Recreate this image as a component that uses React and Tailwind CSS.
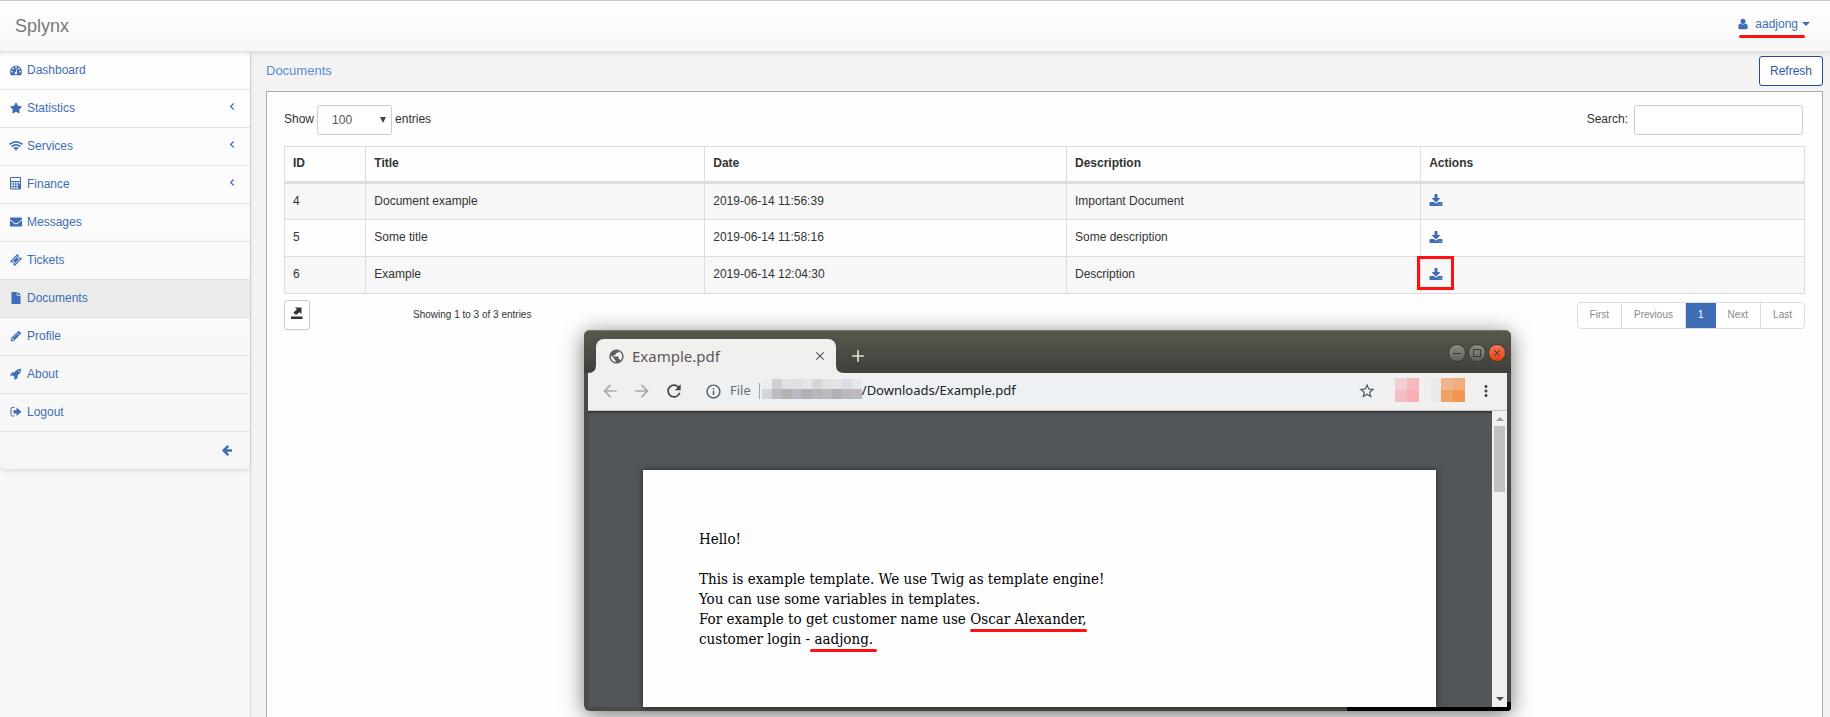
import { FaStar, FaEnvelope, FaFile } from 'react-icons/fa'
import { MdPublic, MdInfoOutline, MdStarBorder, MdArrowBack, MdArrowForward, MdRefresh, MdMoreVert, MdClose, MdAdd } from 'react-icons/md'

const shapes = {
  dashboard:
    'M384 1152q0-53-37.500-90.500t-90.500-37.500-90.500 37.500-37.500 90.500 37.500 90.500 90.500 37.500 90.500-37.500 37.500-90.500zm192-448q0-53-37.500-90.500t-90.500-37.500-90.500 37.500-37.500 90.500 37.500 90.500 90.500 37.500 90.500-37.500 37.500-90.500zm428 481l101-382q6-26-7.500-48.500t-38.500-29.500-48 6.500-30 39.500l-101 382q-60 5-107 43.500t-63 98.500q-20 77 20 146t117 89 146-20 89-117q16-60-6-117t-72-91zm660-33q0-53-37.500-90.500t-90.500-37.500-90.500 37.500-37.500 90.500 37.500 90.500 90.500 37.500 90.500-37.500 37.500-90.500zm-640-640q0-53-37.500-90.500t-90.500-37.500-90.500 37.500-37.500 90.500 37.500 90.500 90.500 37.500 90.500-37.500 37.500-90.500zm448 192q0-53-37.500-90.500t-90.500-37.500-90.500 37.500-37.500 90.500 37.500 90.500 90.500 37.500 90.500-37.500 37.500-90.500zm320 448q0 261-141 483-19 29-54 29h-1402q-35 0-54-29-141-221-141-483 0-182 71-348t191-286 286-191 348-71 348 71 286 191 191 286 71 348z',
  ticket:
    'M1024 452l316 316-572 572-316-316zm-211 979l618-618q19-19 19-45t-19-45l-362-362q-18-18-45-18t-45 18l-618 618q-19 19-19 45t19 45l362 362q18 18 45 18t45-18zm889-637l-907 908q-37 37-90.500 37t-90.500-37l-126-126q56-56 56-136t-56-136-136-56-136 56l-125-126q-37-37-37-90.500t37-90.500l907-906q37-37 90.500-37t90.500 37l125 125q-56 56-56 136t56 136 136 56 136-56l126 125q37 37 37 90.500t-37 90.500z',
  pencil:
    'M491 1536l91-91-235-235-91 91v107h128v128h107zm523-928q0-22-22-22-10 0-17 7l-542 542q-7 7-7 17 0 22 22 22 10 0 17-7l542-542q7-7 7-17zm-54-192l416 416-832 832h-416v-416zm683 96q0 53-37 90l-166 166-416-416 166-165q36-38 90-38 53 0 91 38l235 234q37 39 37 91z',
  rocket:
    'M1440 448q0-40-28-68t-68-28-68 28-28 68 28 68 68 28 68-28 28-68zm224-288q0 249-75.500 430.500t-253.500 360.500q-81 80-195 176l-20 379q-2 16-16 26l-384 224q-7 4-16 4-12 0-23-9l-64-64q-13-14-8-32l85-276-281-281-276 85q-3 1-9 1-14 0-23-9l-64-64q-17-19-5-39l224-384q10-14 26-16l379-20q96-114 176-195 188-187 358-258t431-71q14 0 24 9.500t10 22.500z',
  back:
    'M1664 896v128q0 53-32.500 90.500t-84.500 37.500h-704l293 294q38 36 38 90t-38 90l-75 76q-37 37-90 37-52 0-91-37l-651-652q-37-37-37-90 0-52 37-91l651-650q38-38 91-38 52 0 90 38l75 74q38 38 38 91t-38 91l-293 293h704q52 0 84.500 37.500t32.500 90.500z',
  user:
    'M1600 1405q0 120-73 189.500t-194 69.500h-874q-121 0-194-69.500t-73-189.500q0-53 3.500-103.500t14-109 26.500-108.500 43-97.500 62-81 85.500-53.500 111.500-20q9 0 42 21.500t74.500 48 108 48 133.500 21.500 133.500-21.500 108-48 74.500-48 42-21.500q61 0 111.500 20t85.500 53.500 62 81 43 97.500 26.500 108.500 14 109 3.500 103.500zm-320-893q0 159-112.500 271.500t-271.500 112.500-271.500-112.500-112.500-271.500 112.500-271.500 271.500-112.500 271.500 112.500 112.500 271.500z',
  download:
    'M1344 1344q0-26-19-45t-45-19-45 19-19 45 19 45 45 19 45-19 19-45zm256 0q0-26-19-45t-45-19-45 19-19 45 19 45 45 19 45-19 19-45zm128-224v320q0 40-28 68t-68 28h-1472q-40 0-68-28t-28-68v-320q0-40 28-68t68-28h465l135 136q58 56 136 56t136-56l136-136h464q40 0 68 28t28 68zm-325-569q17 41-14 70l-448 448q-18 19-45 19t-45-19l-448-448q-31-29-14-70 17-39 59-39h256v-448q0-26 19-45t45-19h256q26 0 45 19t19 45v448h256q42 0 59 39z',
}

function Glyph({ name, className }) {
  return (
    <svg viewBox="0 0 1792 1792" className={className} fill="currentColor">
      <path d={shapes[name]} />
    </svg>
  )
}

function WifiIcon() {
  return (
    <svg viewBox="0 0 14 12" className="-ml-px h-3 w-3.5" fill="none" stroke="currentColor" strokeWidth="1.8">
      <path d="M0.6 4.2Q7 -0.6 13.4 4.2M2.7 6.5Q7 3.2 11.3 6.5M4.8 8.6Q7 7 9.2 8.6" />
      <path d="M5.7 9.6Q7 8.9 8.3 9.6L7 11Z" fill="currentColor" stroke="none" />
    </svg>
  )
}

function CalculatorIcon() {
  return (
    <svg viewBox="0 0 12 13" className="h-[13px] w-3" fill="none" stroke="currentColor">
      <path d="M0.5 0.5H10.5V12H0.5ZM0.5 4.5H10.5" />
      <path d="M0.5 7H10.5M0.5 9.5H10.5M3.2 4.5V12M5.7 4.5V12M8.2 4.5V12" strokeWidth="0.8" />
      <path d="M8.5 7.2H10.5V12H8.5Z" fill="currentColor" stroke="none" />
    </svg>
  )
}

function SignOutIcon() {
  return (
    <svg viewBox="0 0 12 12" className="size-3" fill="none" stroke="currentColor">
      <path d="M4.5 1.5H2.2Q1 1.5 1 2.8V8.7Q1 10 2.2 10H4.5" />
      <path d="M3.5 4.2H6.5V1.5L11.5 5.8L6.5 10.1V7.4H3.5Z" fill="currentColor" stroke="none" />
    </svg>
  )
}

function ExportIcon() {
  return (
    <svg viewBox="0 0 12 13" className="mb-1 h-[13px] w-3" fill="currentColor">
      <path d="M4 0.5H10.5V7L8.5 5.2L5 8L2.3 5.6L5.8 2.6ZM0 9.5H11.5V12H0Z" />
    </svg>
  )
}

function ChevronIcon() {
  return (
    <svg viewBox="0 0 4 7" className="mb-0.5 h-[7px] w-1" fill="none" stroke="currentColor" strokeWidth="1.2">
      <path d="M3.7 0.5L0.7 3.5L3.7 6.5" />
    </svg>
  )
}

const menu = [
  { label: 'Dashboard', icon: <Glyph name="dashboard" className="size-3" /> },
  { label: 'Statistics', icon: <FaStar size={12} />, more: true },
  { label: 'Services', icon: <WifiIcon />, more: true },
  { label: 'Finance', icon: <CalculatorIcon />, more: true },
  { label: 'Messages', icon: <FaEnvelope size={12} /> },
  { label: 'Tickets', icon: <Glyph name="ticket" className="size-3" /> },
  { label: 'Documents', icon: <FaFile size={12} />, active: true },
  { label: 'Profile', icon: <Glyph name="pencil" className="size-3" /> },
  { label: 'About', icon: <Glyph name="rocket" className="size-3" /> },
  { label: 'Logout', icon: <SignOutIcon /> },
]

const rows = [
  { id: 4, title: 'Document example', date: '2019-06-14 11:56:39', description: 'Important Document' },
  { id: 5, title: 'Some title', date: '2019-06-14 11:58:16', description: 'Some description' },
  { id: 6, title: 'Example', date: '2019-06-14 12:04:30', description: 'Description', marked: true },
]

function Header() {
  return (
    <header className="relative z-10 flex h-[52px] items-center justify-between border-t border-b border-t-[#c8c8c8] border-b-[#e4e4e4] bg-linear-to-b from-white to-[#f7f7f7] pr-5 pl-[15px] shadow-[0_1px_6px_rgba(0,0,0,0.1)]">
      <a href="#home" className="text-lg text-[#777777]">Splynx</a>
      <button type="button" className="relative flex items-center gap-1 pb-1">
        <Glyph name="user" className="mr-0.5 size-3" />
        aadjong
        <span className="border-x-4 border-t-4 border-x-transparent border-t-current" />
        <span className="absolute -bottom-0.5 left-0.5 h-[3px] w-[66px] rounded-full bg-[#ff0f0f]" />
      </button>
    </header>
  )
}

function Sidebar() {
  return (
    <aside className="w-[251px] shrink-0 border-r border-[#d9d9d9] bg-[#f7f7f7]">
      <nav className="rounded-md border-b border-[#e2e2e2] bg-linear-to-b from-[#fefefe] to-[#f6f6f6] shadow-[0_1px_5px_rgba(0,0,0,0.1)]">
        <ul>
          {menu.map((item) => (
            <li key={item.label} className={item.active ? 'border-b border-[#e2e2e2] bg-[#ebebeb]' : 'border-b border-[#e2e2e2]'}>
              <a href={'#' + item.label.toLowerCase()} className="flex h-[37px] items-center pr-4 pb-0.5 pl-2.5">
                <span className="flex w-[17px] items-center">{item.icon}</span>
                <span className="grow">{item.label}</span>
                {item.more && <ChevronIcon />}
              </a>
            </li>
          ))}
        </ul>
        <button type="button" aria-label="Collapse menu" className="flex h-[37px] w-full items-center justify-end pr-[17px] pb-0.5">
          <Glyph name="back" className="size-3" />
        </button>
      </nav>
    </aside>
  )
}

const cell = 'border border-[#dddddd] px-2 pb-0.5'
const pagerItem = 'border-r border-[#dddddd] px-3 text-[#888888] last:border-r-0'

function Documents() {
  return (
    <main className="flex min-w-0 grow flex-col pr-[7px] pl-[15px]">
      <div className="flex h-[39px] items-start justify-between pt-1">
        <h1 className="text-[13px] leading-[30px] text-[#5b8bd4]">Documents</h1>
        <button type="button" className="h-[30px] rounded-[3px] border border-[#234a9c] bg-white px-2.5 text-[#3058a8]">Refresh</button>
      </div>
      <section className="grow border border-b-0 border-[#acacac] bg-[#fefefe] px-[17px] pt-[13px] text-[#333333]">
        <div className="flex items-center justify-between">
          <label className="flex items-center gap-[3px]">
            <span className="pb-0.5">Show</span>
            <span className="relative flex">
              <select defaultValue="100" className="h-[30px] w-[75px] appearance-none rounded-[3px] border border-[#cccccc] bg-white pl-3.5 text-[#555555]">
                <option>10</option>
                <option>100</option>
              </select>
              <span className="pointer-events-none absolute top-3 right-1.5 border-x-3 border-t-6 border-x-transparent border-t-[#444444]" />
            </span>
            <span className="pb-0.5">entries</span>
          </label>
          <label className="flex items-center gap-1.5 pr-0.5">
            <span className="pb-0.5">Search:</span>
            <input type="search" className="h-[30px] w-[169px] rounded-[3px] border border-[#cccccc] bg-white px-2" />
          </label>
        </div>
        <table className="mt-[11px] w-full table-fixed border-collapse text-left">
          <colgroup>
            <col className="w-[5.35%]" />
            <col className="w-[22.3%]" />
            <col className="w-[23.8%]" />
            <col className="w-[23.3%]" />
            <col />
          </colgroup>
          <thead>
            <tr className="h-9">
              {['ID', 'Title', 'Date', 'Description', 'Actions'].map((name) => (
                <th key={name} className="border border-b-3 border-[#dddddd] px-2 pb-0.5 font-bold">{name}</th>
              ))}
            </tr>
          </thead>
          <tbody>
            {rows.map((row) => (
              <tr key={row.id} className="h-[37px] odd:bg-[#f7f7f7]">
                <td className={cell}>{row.id}</td>
                <td className={cell}>{row.title}</td>
                <td className={cell}>{row.date}</td>
                <td className={cell}>{row.description}</td>
                <td className={cell}>
                  <a href={'#download-' + row.id} aria-label={'Download ' + row.title} className="relative inline-flex align-middle text-[#3f6db5]">
                    <Glyph name="download" className="size-3.5" />
                    {row.marked && <span className="absolute -top-3 -left-3 h-[34px] w-[37px] border-3 border-[#ff0f0f]" />}
                  </a>
                </td>
              </tr>
            ))}
          </tbody>
        </table>
        <div className="mt-1.5 flex items-center justify-between">
          <div className="flex items-center">
            <button type="button" aria-label="Export" className="flex h-[30px] w-[26px] items-center justify-center rounded-[3px] border border-[#cccccc] bg-white shadow-xs">
              <ExportIcon />
            </button>
            <p className="ml-[103px] text-[10px]">Showing 1 to 3 of 3 entries</p>
          </div>
          <div className="flex h-[27px] items-stretch overflow-hidden rounded-sm border border-[#dddddd] bg-white text-[10px]">
            <button type="button" className={pagerItem}>First</button>
            <button type="button" className={pagerItem}>Previous</button>
            <button type="button" className="bg-[#3f6db5] px-3 text-white">1</button>
            <button type="button" className={pagerItem}>Next</button>
            <button type="button" className={pagerItem}>Last</button>
          </div>
        </div>
      </section>
    </main>
  )
}

const hiddenPath = [
  ['bg-[#e9edef]', 'bg-[#cfd0d4]', 'bg-[#dfe1e4]', 'bg-[#dde1e5]', 'bg-[#e3e6e8]', 'bg-[#d5d6da]', 'bg-[#dfe2e4]', 'bg-[#e2e4e6]', 'bg-[#dadde4]', 'bg-[#e5e8ea]'],
  ['bg-[#d4d5d7]', 'bg-[#babbc4]', 'bg-[#b5b1b2]', 'bg-[#b8b9c6]', 'bg-[#b4afb1]', 'bg-[#b6b7bf]', 'bg-[#bbbbb9]', 'bg-[#b0afb6]', 'bg-[#b9b8bd]', 'bg-[#bababf]'],
]

function TitleBar() {
  return (
    <div className="-mx-1 flex h-[43px] items-end justify-between rounded-t-md border-t border-[#77776e] bg-linear-to-b from-[#58584e] to-[#403f3a] pr-1.5 pl-3">
      <div className="flex items-center">
        <div className="relative flex h-[34px] w-60 items-center rounded-t-lg bg-[#f2f0ee] pr-[9px] pl-3">
          <svg viewBox="0 0 8 8" className="absolute bottom-0 -left-2 size-2" fill="#f2f0ee"><path d="M8 0V8H0Q8 8 8 0Z" /></svg>
          <svg viewBox="0 0 8 8" className="absolute -right-2 bottom-0 size-2" fill="#f2f0ee"><path d="M0 0V8H8Q0 8 0 0Z" /></svg>
          <MdPublic size={17} color="#5b5e63" />
          <span className="grow pl-[7px] text-[15px] text-[#58585a]">Example.pdf</span>
          <button type="button" aria-label="Close tab" className="text-[#555555]"><MdClose size={14} /></button>
        </div>
        <button type="button" aria-label="New tab" className="ml-3 text-[#e3e0d3]"><MdAdd size={20} /></button>
      </div>
      <div className="mb-3 flex gap-1 text-[#3c3b37]">
        <button type="button" aria-label="Minimize" className="flex size-4 items-center justify-center rounded-full bg-linear-to-b from-[#8b8a83] to-[#63635c] ring-1 ring-[#3a3934]">
          <span className="h-px w-2 bg-current" />
        </button>
        <button type="button" aria-label="Maximize" className="flex size-4 items-center justify-center rounded-full bg-linear-to-b from-[#8b8a83] to-[#63635c] ring-1 ring-[#3a3934]">
          <span className="size-2 border border-current" />
        </button>
        <button type="button" aria-label="Close" className="flex size-4 items-center justify-center rounded-full bg-linear-to-b from-[#f7764f] to-[#e23d05] ring-1 ring-[#3a3934]">
          <MdClose size={10} />
        </button>
      </div>
    </div>
  )
}

function Toolbar() {
  return (
    <div className="flex h-[38px] items-center border-b border-[#c4c4c4] bg-[#f2f0ee] pr-3 pb-px pl-3 text-[#55585c]">
      <button type="button" aria-label="Back" className="text-[#aaaaaa]"><MdArrowBack size={20} /></button>
      <button type="button" aria-label="Forward" className="ml-3 text-[#aaaaaa]"><MdArrowForward size={20} /></button>
      <button type="button" aria-label="Reload" className="ml-3 text-[#444444]"><MdRefresh size={20} /></button>
      <div className="ml-3 flex h-7 grow items-center rounded-full bg-[#edf1f3] pr-2.5 pl-[9px] text-[13px]">
        <MdInfoOutline size={17} />
        <span className="ml-2 text-[#6a6d72]">File</span>
        <span className="mr-0.5 ml-2 h-4 w-px bg-[#a5a8ab]" />
        <span className="mb-1 grid grid-cols-10">
          {hiddenPath.flat().map((tone, i) => (
            <span key={i} className={'size-2.5 ' + tone} />
          ))}
        </span>
        <span className="grow text-[#202124]">/Downloads/Example.pdf</span>
        <MdStarBorder size={18} />
      </div>
      <div className="mb-0.5 ml-[9px] grid grid-cols-2">
        <span className="size-3 bg-[#f1cfd3]" />
        <span className="size-3 bg-[#f5bac0]" />
        <span className="size-3 bg-[#f3bec3]" />
        <span className="size-3 bg-[#f8b0b5]" />
      </div>
      <div className="mb-0.5 ml-3 h-6 w-2.5 bg-[#eceae9]" />
      <div className="mb-0.5 grid grid-cols-2">
        <span className="size-3 bg-[#f0b58c]" />
        <span className="size-3 bg-[#f0ad7e]" />
        <span className="size-3 bg-[#f1a066]" />
        <span className="size-3 bg-[#f29553]" />
      </div>
      <button type="button" aria-label="Menu" className="ml-3 text-[#444444]"><MdMoreVert size={18} /></button>
    </div>
  )
}

function Page() {
  return (
    <div className="flex h-[296px] bg-[#525659] shadow-[inset_0_2px_2px_rgba(0,0,0,0.35)]">
      <article className="mt-[59px] ml-[55px] w-[793px] bg-[#fefefe] px-14 pt-[59px] font-['DejaVu_Serif_Condensed','DejaVu_Serif',serif] text-[15px] leading-5 text-black shadow-[0_0_6px_rgba(0,0,0,0.6)]">
        <p>Hello!</p>
        <p className="mt-5">
          This is example template. We use Twig as template engine!
          <br />
          You can use some variables in templates.
          <br />
          For example to get customer name use{' '}
          <span className="relative">
            Oscar Alexander,
            <span className="absolute inset-x-0 -bottom-1 h-[3px] rounded-full bg-[#ff0f0f]" />
          </span>
          <br />
          customer login -{' '}
          <span className="relative">
            aadjong.
            <span className="absolute -inset-x-1 -bottom-1 h-[3px] rounded-full bg-[#ff0f0f]" />
          </span>
        </p>
      </article>
      <div className="ml-auto flex w-[15px] flex-col items-center bg-[#f0f0f0] py-1.5">
        <span className="border-x-4 border-b-4 border-x-transparent border-b-[#a0a0a0]" />
        <span className="mt-[5px] h-[66px] w-[11px] bg-[#c1c1c1]" />
        <span className="mt-auto border-x-4 border-t-4 border-x-transparent border-t-[#505050]" />
      </div>
    </div>
  )
}

function BrowserWindow() {
  return (
    <div className="absolute top-[330px] left-[584px] z-20 w-[927px] rounded-md bg-[#4b4a43] px-1 pb-1 font-['Noto_Sans','Open_Sans',sans-serif] shadow-[0_4px_22px_rgba(0,0,0,0.55)]">
      <TitleBar />
      <Toolbar />
      <Page />
      <span className="absolute right-0 bottom-0 h-1 w-[164px] rounded-br-sm bg-black" />
      <span className="absolute right-0 bottom-0 h-[9px] w-1 rounded-br-sm bg-black" />
    </div>
  )
}

export default function App() {
  return (
    <div className="relative flex min-h-screen flex-col bg-[#f3f3f3] font-['Liberation_Sans',Arial,sans-serif] text-xs text-[#3f6db5]">
      <Header />
      <div className="flex grow">
        <Sidebar />
        <Documents />
      </div>
      <BrowserWindow />
    </div>
  )
}
